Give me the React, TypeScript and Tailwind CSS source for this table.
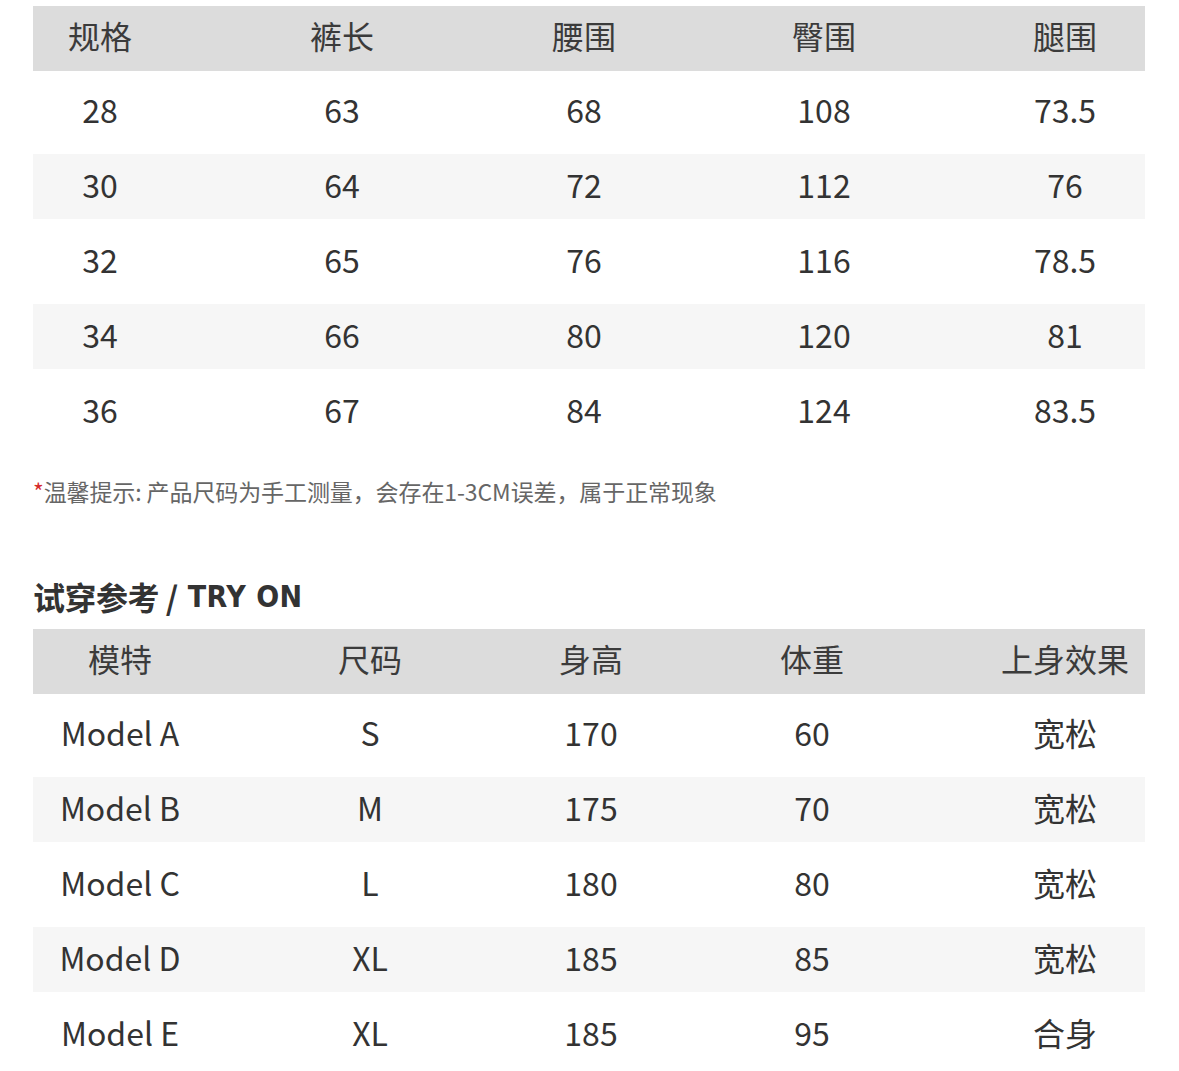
import React from 'react';

const sizeHead = ['规格', '裤长', '腰围', '臀围', '腿围'];
const sizeRows = [
  ['28', '63', '68', '108', '73.5'],
  ['30', '64', '72', '112', '76'],
  ['32', '65', '76', '116', '78.5'],
  ['34', '66', '80', '120', '81'],
  ['36', '67', '84', '124', '83.5'],
];

const tryHead = ['模特', '尺码', '身高', '体重', '上身效果'];
const tryRows = [
  ['Model A', 'S', '170', '60', '宽松'],
  ['Model B', 'M', '175', '70', '宽松'],
  ['Model C', 'L', '180', '80', '宽松'],
  ['Model D', 'XL', '185', '85', '宽松'],
  ['Model E', 'XL', '185', '95', '合身'],
];

interface TableProps {
  head: string[];
  rows: string[][];
  cols: string;
}

function SizeTable({ head, rows, cols }: TableProps) {
  return (
    <div className="flex flex-col gap-[10px]">
      {/* Header */}
      <div className={`grid ${cols} h-[65px] items-center pb-[8px] bg-[#dcdcdc] text-[32px] text-[#3b3b3b] mb-[-2px]`}>
        {head.map(h => (
          <div key={h} className="text-center whitespace-nowrap">{h}</div>
        ))}
      </div>

      {/* Rows */}
      {rows.map((row, i) => (
        <div
          key={i}
          className={`grid ${cols} h-[65px] items-center pb-[6px] text-[32px] text-[#333] ${i % 2 === 1 ? 'bg-[#f6f6f6]' : 'bg-white'}`}
        >
          {row.map((cell, j) => (
            <div key={j} className="text-center whitespace-nowrap">{cell}</div>
          ))}
        </div>
      ))}
    </div>
  );
}

export default function App() {
  return (
    <div
      className="w-[1179px] h-[1071px] bg-white overflow-hidden pt-[6px] pl-[33px]"
      style={{ fontFamily: '"Noto Sans CJK SC", "Noto Sans", sans-serif' }}
    >
      <div className="w-[1112px]">
        <SizeTable head={sizeHead} rows={sizeRows} cols="grid-cols-[134px_350px_134px_346px_136px]" />

        {/* Note */}
        <p className="mt-[32px] text-[23px] leading-[30px] text-[#666] tracking-[-0.1px]">
          <span className="text-[#d62b2b]">*</span>温馨提示: 产品尺码为手工测量，会存在1-3CM误差，属于正常现象
        </p>

        {/* Try on title */}
        <h2 className="mt-[70px] flex items-center h-[40px] text-[32px] font-bold text-[#333]">
          <span className="tracking-[-0.5px]">试穿参考 / </span>
          <span
            className="ml-[10px] text-[30px] font-black tracking-[0.5px]"
            style={{ fontFamily: '"DejaVu Sans Condensed", "DejaVu Sans", sans-serif' }}
          >
            TRY ON
          </span>
        </h2>

        <div className="mt-[13px]">
          <SizeTable head={tryHead} rows={tryRows} cols="grid-cols-[174px_326px_116px_326px_180px]" />
        </div>
      </div>
    </div>
  );
}
